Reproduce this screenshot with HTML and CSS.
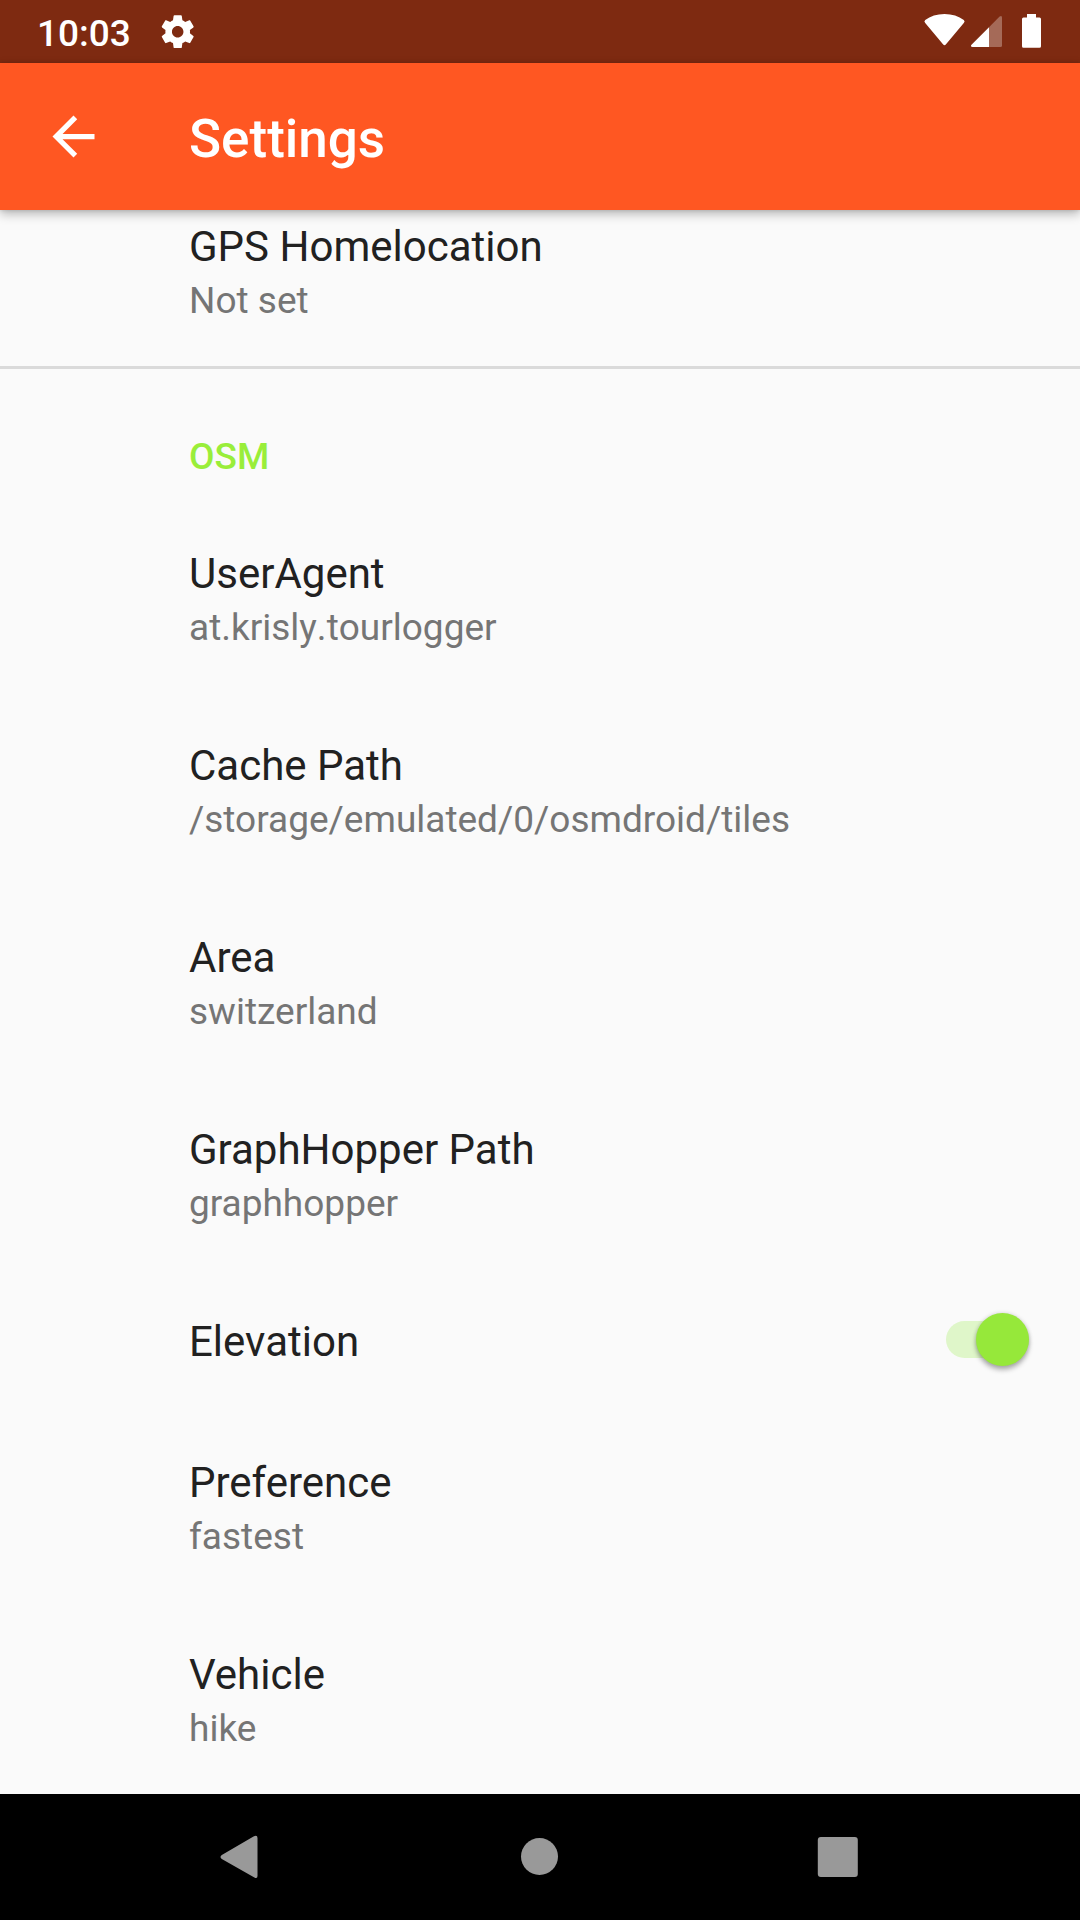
FILE: index.html
```html
<!DOCTYPE html>
<html lang="en">
<head>
<meta charset="utf-8">
<title>Settings</title>
<link rel="stylesheet" href="styles.css">
</head>
<body>
<div class="screen">
  <div class="status-bar">
    <span class="clock">10:03</span>
    <svg class="gear" viewBox="0 0 24 24"><path d="M19.43 12.98c.04-.32.07-.64.07-.98s-.03-.66-.07-.98l2.11-1.65c.19-.15.24-.42.12-.64l-2-3.46c-.12-.22-.39-.3-.61-.22l-2.49 1c-.52-.4-1.08-.73-1.69-.98l-.38-2.65C14.46 2.18 14.25 2 14 2h-4c-.25 0-.46.18-.49.42l-.38 2.65c-.61.25-1.17.59-1.69.98l-2.49-1c-.23-.09-.49 0-.61.22l-2 3.46c-.13.22-.07.49.12.64l2.11 1.65c-.04.32-.07.65-.07.98s.03.66.07.98l-2.11 1.65c-.19.15-.24.42-.12.64l2 3.46c.12.22.39.3.61.22l2.49-1c.52.4 1.08.73 1.69.98l.38 2.65c.03.24.24.42.49.42h4c.25 0 .46-.18.49-.42l.38-2.65c.61-.25 1.17-.59 1.69-.98l2.49 1c.23.09.49 0 .61-.22l2-3.46c.12-.22.07-.49-.12-.64l-2.11-1.65zM12 15.5c-1.93 0-3.5-1.57-3.5-3.5s1.57-3.5 3.5-3.5 3.5 1.57 3.5 3.5-1.57 3.5-3.5 3.5z"/></svg>
    <svg class="indicators" viewBox="0 0 120 63">
      <path d="M5.2 23 Q3.6 21.4 5.2 20 Q13 14 24.5 14 Q36 14 43.800 20 Q45.400 21.400 43.800 23 L25.800 44.500 Q24.500 46 23.200 44.500 Z"/>
      <path fill-opacity=".3" d="M69 27.200 L79.600 16.500 Q82 15 82 17.500 V45.500 Q82 47 80.500 47 H69 Z"/>
      <path d="M69 27.200 V47 H52.500 Q50 46.600 51.500 44.700 Z"/>
      <path d="M107 14 H116 V17.500 H119.500 Q121 17.500 121 19 V46.200 Q121 47.700 119.500 47.700 H103.500 Q102 47.700 102 46.200 V19 Q102 17.500 103.500 17.500 H107 Z"/>
    </svg>
  </div>
  <header class="app-bar">
    <svg class="back" viewBox="0 0 24 24"><path d="M20 11H7.830l5.590-5.590L12 4l-8 8 8 8 1.410-1.410L7.830 13H20v-2z"/></svg>
    <h1 class="heading">Settings</h1>
  </header>
  <main class="list">
    <div class="row"><div class="title">GPS Homelocation</div><div class="summary">Not set</div></div>
    <h2 class="category">OSM</h2>
    <div class="row"><div class="title">UserAgent</div><div class="summary package">at.krisly.tourlogger</div></div>
    <div class="row"><div class="title">Cache Path</div><div class="summary">/storage/emulated/0/osmdroid/tiles</div></div>
    <div class="row"><div class="title">Area</div><div class="summary">switzerland</div></div>
    <div class="row"><div class="title">GraphHopper Path</div><div class="summary">graphhopper</div></div>
    <div class="row row-switch"><div class="title">Elevation</div><div class="switch"><div class="thumb"></div></div></div>
    <div class="row"><div class="title">Preference</div><div class="summary">fastest</div></div>
    <div class="row"><div class="title">Vehicle</div><div class="summary">hike</div></div>
  </main>
  <nav class="nav-bar">
    <svg viewBox="0 0 48 48"><path d="M37.500 3.400 Q41.500 1.500 41.500 5 V43 Q41.500 46.500 37.500 44.100 L5.800 26 Q3.200 24 5.800 22 Z"/></svg>
    <svg viewBox="0 0 48 48"><circle cx="24.500" cy="23.500" r="18.500"/></svg>
    <svg viewBox="0 0 48 48"><rect x="3.800" y="4" width="40" height="40" rx="3"/></svg>
  </nav>
</div>
</body>
</html>
```
FILE: styles.css
```css
* { box-sizing: border-box; }
body { margin: 0; font-family: Roboto, sans-serif; }
.screen {
  width: 1080px;
  height: 1920px;
  display: flex;
  flex-direction: column;
  background: #fafafa;
  overflow: hidden;
}
.status-bar {
  flex: none;
  height: 63px;
  display: flex;
  align-items: center;
  padding-left: 37px;
  background: #7e2a11;
  color: #fff;
}
.clock { width: 121px; padding-top: 4px; font-size: 37px; font-weight: 500; line-height: 44px; }
.gear { width: 39.400px; height: 39.400px; fill: #fff; }
.indicators { width: 120px; height: 63px; margin-left: auto; margin-right: 40px; fill: #fff; overflow: visible; }
.app-bar {
  flex: none;
  height: 147px;
  display: flex;
  align-items: center;
  padding-left: 42px;
  gap: 84px;
  background: #ff5722;
  color: #fff;
  box-shadow: 0 4px 10px rgba(0, 0, 0, .27), 0 0 4px rgba(0, 0, 0, .14);
  z-index: 1;
}
.back { width: 63px; height: 63px; fill: #fff; }
.heading { margin: 0; padding-top: 5px; font-size: 53px; font-weight: 500; line-height: 62px; }
/* The list is scrolled to its end, so the first row slides under the app bar. */
.list {
  flex: none;
  height: 1584px;
  display: flex;
  flex-direction: column;
  justify-content: flex-end;
  overflow: hidden;
}
.row { flex: none; padding: 44px 42px 40px 189px; }
.title { font-size: 42px; line-height: 57px; color: #212121; }
.summary { font-size: 37px; line-height: 51px; color: #757575; }
.package { font-kerning: none; }
.category {
  flex: none;
  height: 135px;
  margin: 0;
  padding: 63px 42px 0 189px;
  border-top: 3px solid #dadada;
  font-size: 37px;
  font-weight: 500;
  line-height: 50px;
  color: #99ee3a;
}
.row-switch {
  height: 141px;
  display: flex;
  justify-content: space-between;
  padding-right: 51px;
}
.switch {
  width: 83px;
  height: 37px;
  margin-top: 8px;
  display: flex;
  align-items: center;
  justify-content: flex-end;
  border-radius: 19px;
  background: #dff6c9;
}
.thumb {
  flex: none;
  width: 53px;
  height: 53px;
  border-radius: 50%;
  background: #96e83a;
  box-shadow: 0 4px 5px rgba(0, 0, 0, .28), 0 0 4px rgba(0, 0, 0, .16);
}
.nav-bar {
  flex: none;
  height: 126px;
  display: flex;
  align-items: center;
  justify-content: center;
  gap: 251px;
  padding-right: 2px;
  background: #000;
}
.nav-bar svg { width: 48px; height: 48px; fill: #999; }
```
